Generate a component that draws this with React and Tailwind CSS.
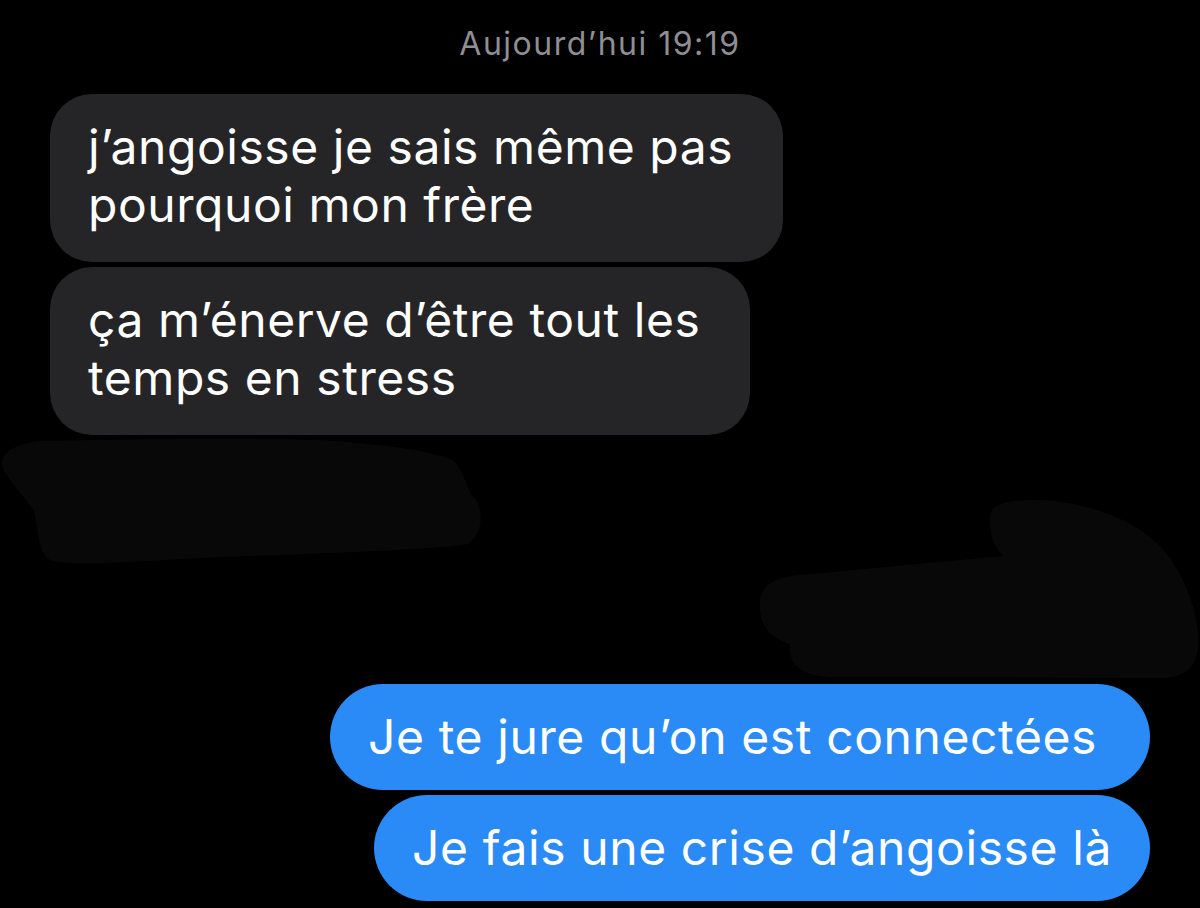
import React from 'react';

const font = { fontFamily: 'Inter, "Noto Sans", sans-serif' };

const Received = ({ lines }) => (
  <div className="w-fit rounded-[42px] bg-[#252527] pl-[38px] pr-[50px] pt-6 pb-7 text-[48px] leading-[58px] tracking-[0.55px] text-white whitespace-nowrap">
    {lines.map((l, i) => (
      <div key={i}>{l}</div>
    ))}
  </div>
);

const Sent = ({ text, wide }) => (
  <div
    className={`w-fit self-end rounded-[53px] bg-[#2a8af6] pl-[38px] ${wide ? 'pr-[53px]' : 'pr-[38px]'} py-6 text-[48px] leading-[58px] tracking-[0.6px] text-white whitespace-nowrap`}
  >
    {text}
  </div>
);

// scribbled-out messages, drawn over the gap
const Scribbles = () => (
  <svg className="block w-full h-[249px]" viewBox="0 437 1200 249" preserveAspectRatio="none">
    <path
      d="M40 443 C120 441 240 440 320 442 C380 446 430 452 452 462 C466 472 464 490 476 502 C484 515 482 538 468 546 C440 552 300 556 200 560 C130 564 70 568 50 562 C38 555 38 530 34 512 C20 494 4 478 2 466 C2 452 18 446 40 443 Z"
      fill="#080808"
    />
    <path
      d="M990 522 C988 506 1008 501 1040 502 C1100 505 1150 530 1170 560 C1190 590 1200 622 1198 650 C1196 670 1184 680 1160 680 L830 679 C800 678 788 666 790 646 C768 640 758 624 760 602 C762 586 776 579 800 577 L1004 558 C992 548 990 536 990 522 Z"
      fill="#080808"
    />
  </svg>
);

export default function App() {
  return (
    <div className="min-h-[908px] w-full bg-black overflow-hidden" style={font}>
      <div className="pt-[27px] text-center text-[32px] leading-[34px] tracking-[1.5px] text-[#8e8e93]">
        Aujourd’hui 19:19
      </div>
      <div className="mt-[33px] flex flex-col gap-[5px] pl-[50px]">
        <Received lines={['j’angoisse je sais même pas', 'pourquoi mon frère']} />
        <Received lines={['ça m’énerve d’être tout les', 'temps en stress']} />
      </div>
      <Scribbles />
      <div className="flex flex-col gap-[5px] pr-[50px]">
        <Sent text="Je te jure qu’on est connectées" wide />
        <Sent text="Je fais une crise d’angoisse là" />
      </div>
    </div>
  );
}
